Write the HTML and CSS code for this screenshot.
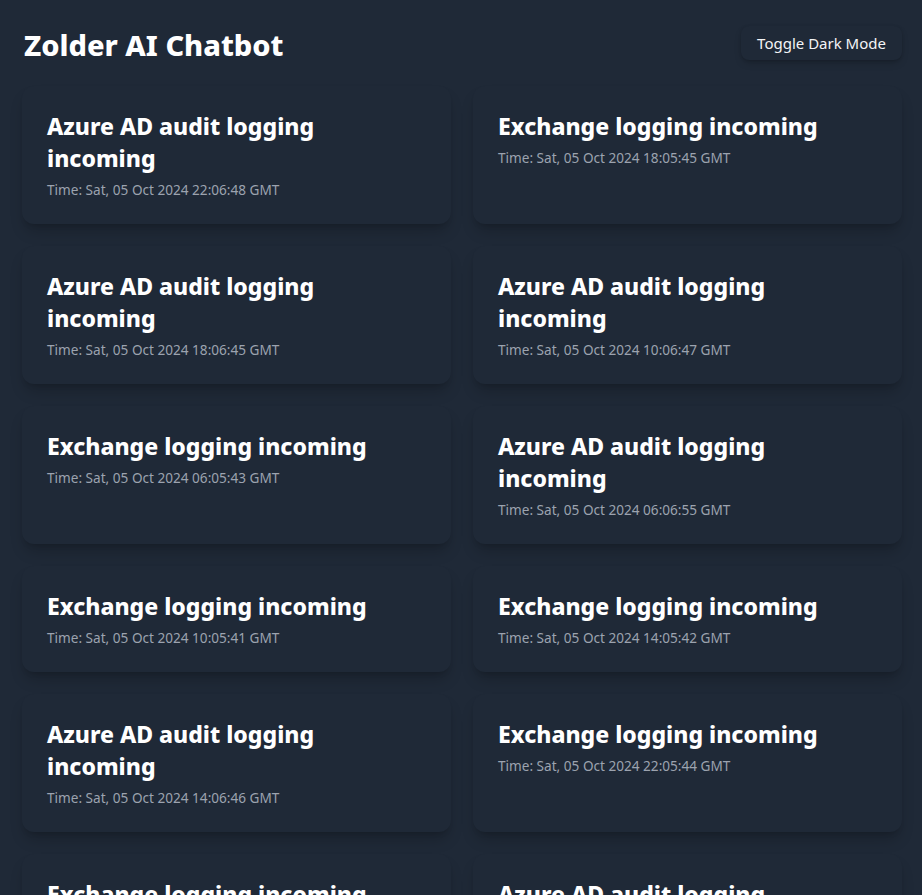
FILE: index.html
```html
<!DOCTYPE html>
<html lang="en">
<head>
<meta charset="utf-8">
<title>Zolder AI Chatbot</title>
<link rel="stylesheet" href="styles.css">
</head>
<body>
<div class="app">
  <header class="header">
    <h1 class="app-title">Zolder AI Chatbot</h1>
    <button class="toggle">Toggle Dark Mode</button>
  </header>
  <main class="grid">
    <article class="card"><h2 class="card-title">Azure AD audit logging incoming</h2><p class="card-time">Time: Sat, 05 Oct 2024 22:06:48 GMT</p></article>
    <article class="card"><h2 class="card-title">Exchange logging incoming</h2><p class="card-time">Time: Sat, 05 Oct 2024 18:05:45 GMT</p></article>
    <article class="card"><h2 class="card-title">Azure AD audit logging incoming</h2><p class="card-time">Time: Sat, 05 Oct 2024 18:06:45 GMT</p></article>
    <article class="card"><h2 class="card-title">Azure AD audit logging incoming</h2><p class="card-time">Time: Sat, 05 Oct 2024 10:06:47 GMT</p></article>
    <article class="card"><h2 class="card-title">Exchange logging incoming</h2><p class="card-time">Time: Sat, 05 Oct 2024 06:05:43 GMT</p></article>
    <article class="card"><h2 class="card-title">Azure AD audit logging incoming</h2><p class="card-time">Time: Sat, 05 Oct 2024 06:06:55 GMT</p></article>
    <article class="card"><h2 class="card-title">Exchange logging incoming</h2><p class="card-time">Time: Sat, 05 Oct 2024 10:05:41 GMT</p></article>
    <article class="card"><h2 class="card-title">Exchange logging incoming</h2><p class="card-time">Time: Sat, 05 Oct 2024 14:05:42 GMT</p></article>
    <article class="card"><h2 class="card-title">Azure AD audit logging incoming</h2><p class="card-time">Time: Sat, 05 Oct 2024 14:06:46 GMT</p></article>
    <article class="card"><h2 class="card-title">Exchange logging incoming</h2><p class="card-time">Time: Sat, 05 Oct 2024 22:05:44 GMT</p></article>
    <article class="card"><h2 class="card-title">Exchange logging incoming</h2><p class="card-time">Time: Sat, 05 Oct 2024 02:05:40 GMT</p></article>
    <article class="card"><h2 class="card-title">Azure AD audit logging incoming</h2><p class="card-time">Time: Sat, 05 Oct 2024 02:06:44 GMT</p></article>
  </main>
</div>
</body>
</html>
```
FILE: styles.css
```css
* { box-sizing: border-box; }
html, body {
  margin: 0;
  background: #1f2937;
}
body {
  font-family: "Noto Sans", "Open Sans", "DejaVu Sans", sans-serif;
  color: #ffffff;
}
.app {
  padding: 20px 20px 20px 22px;
}
.header {
  display: flex;
  justify-content: space-between;
  align-items: center;
  height: 50px;
  margin-bottom: 16px;
}
.app-title {
  margin: 0 0 0 2px;
  font-size: 29px;
  line-height: 36px;
  font-weight: 800;
  color: #ffffff;
}
.toggle {
  align-self: flex-start;
  margin-top: 6px;
  height: 34px;
  padding: 0 16px;
  border: none;
  border-radius: 8px;
  background: #1f2937;
  color: #f3f4f6;
  font-family: inherit;
  font-size: 15px;
  box-shadow: 0 4px 8px -2px rgba(0,0,0,0.22), 0 1px 3px rgba(0,0,0,0.12);
}
.grid {
  display: grid;
  grid-template-columns: 1fr 1fr;
  gap: 22px 22px;
}
.card {
  background: #1f2937;
  border-radius: 12px;
  padding: 24px 24px 24px 25px;
  box-shadow: 0 10px 15px -3px rgba(0,0,0,0.2), 0 4px 6px -4px rgba(0,0,0,0.2);
}
.card-title {
  margin: 0;
  font-size: 23px;
  line-height: 32px;
  font-weight: 800;
  color: #ffffff;
}
.card-time {
  margin: 6px 0 0;
  font-size: 13.6px;
  line-height: 20px;
  color: #9ca3af;
}
```
